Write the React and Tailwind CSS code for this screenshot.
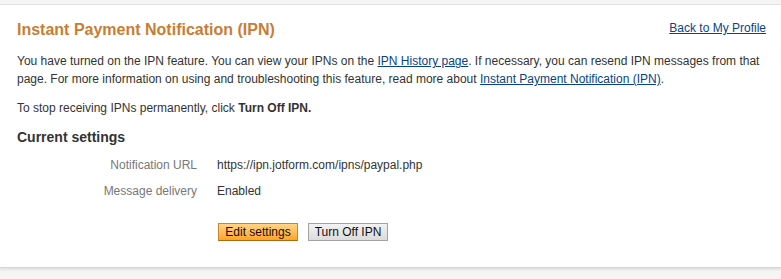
export default function App() {
  return (
    <div className="h-[279px] w-[781px] bg-[#f5f5f5] flex flex-col overflow-hidden" style={{ fontFamily: '"Liberation Sans", Arial, sans-serif' }}>
      <div className="h-[4px] shrink-0" />
      <div className="bg-white border-t border-[#e2e2e2] border-b border-b-[#d4d4d4] shadow-[0_2px_2px_rgba(0,0,0,0.08)] h-[264px] shrink-0 px-[17px] pt-[14px]">
        <div className="flex justify-between items-center h-[22px]">
          <h1 className="text-[16px] font-bold text-[#c97d33] leading-[22px]">Instant Payment Notification (IPN)</h1>
          <a href="#" className="text-[12px] text-[#084482] underline mr-[-2px] mt-[-4px]">Back to My Profile</a>
        </div>
        <p className="mt-[11px] text-[12px] leading-[18px] text-[#333]">
          You have turned on the IPN feature. You can view your IPNs on the{' '}
          <a href="#" className="text-[#084482] underline">IPN History page</a>. If necessary, you can resend IPN messages from that page. For more information on using and troubleshooting this feature, read more about{' '}
          <a href="#" className="text-[#084482] underline">Instant Payment Notification (IPN)</a>.
        </p>
        <p className="mt-[11px] text-[12px] leading-[18px] text-[#333]">
          To stop receiving IPNs permanently, click <b>Turn Off IPN.</b>
        </p>
        <h2 className="mt-[10px] text-[14px] font-bold leading-[20px] text-[#333]">Current settings</h2>
        <div className="mt-[9px] flex flex-col gap-[8px] text-[12px] leading-[18px]">
          <div className="flex gap-[20px]">
            <div className="w-[180px] text-right text-[#777]">Notification URL</div>
            <div className="text-[#333]">https://ipn.jotform.com/ipns/paypal.php</div>
          </div>
          <div className="flex gap-[20px]">
            <div className="w-[180px] text-right text-[#777]">Message delivery</div>
            <div className="text-[#333]">Enabled</div>
          </div>
        </div>
        <div className="mt-[23px] ml-[201px] flex gap-[10px]">
          <button className="w-[80px] h-[18px] text-[12px] leading-[16px] text-[#1a0a00] border border-[#c8872a] border-b-[#a86a14] bg-gradient-to-b from-[#ffd584] to-[#ffa41c]">Edit settings</button>
          <button className="w-[80px] h-[18px] text-[12px] leading-[16px] text-[#111] border border-[#a3a3a3] bg-gradient-to-b from-[#f2f2f2] to-[#dcdcdc]">Turn Off IPN</button>
        </div>
      </div>
    </div>
  );
}
